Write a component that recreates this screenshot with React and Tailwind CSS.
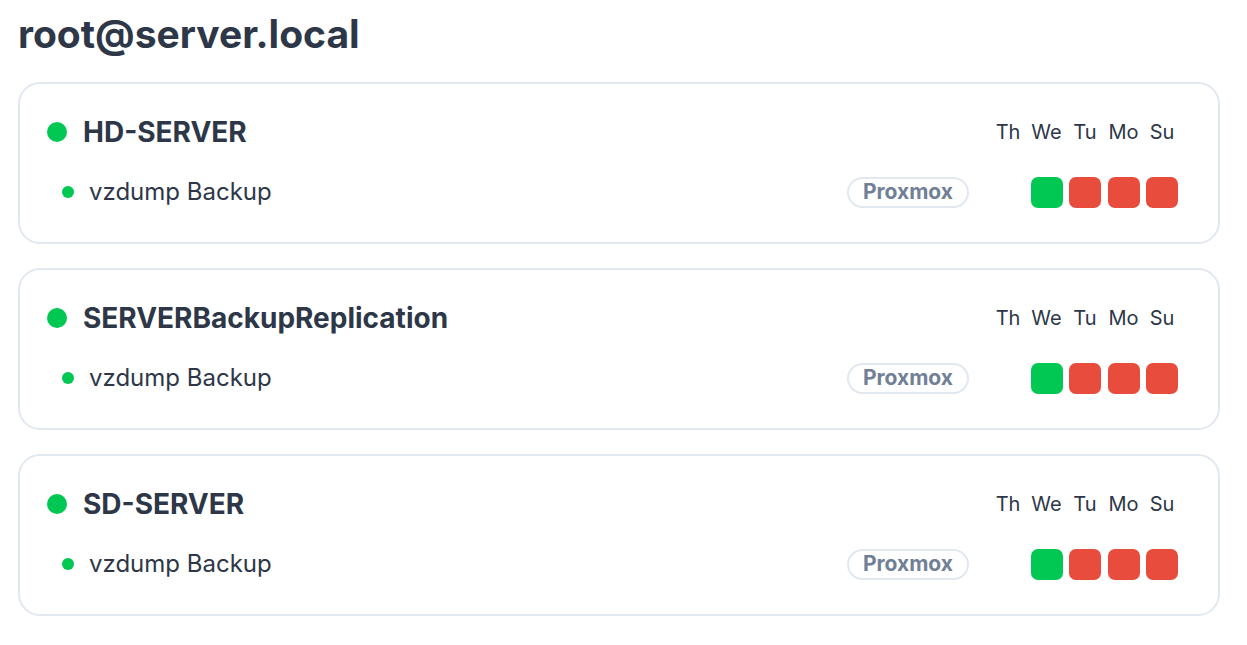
import React from 'react';

const servers = [
  { name: 'HD-SERVER', jobs: [{ name: 'vzdump Backup', type: 'Proxmox', days: [null, 'ok', 'fail', 'fail', 'fail'] }] },
  { name: 'SERVERBackupReplication', jobs: [{ name: 'vzdump Backup', type: 'Proxmox', days: [null, 'ok', 'fail', 'fail', 'fail'] }] },
  { name: 'SD-SERVER', jobs: [{ name: 'vzdump Backup', type: 'Proxmox', days: [null, 'ok', 'fail', 'fail', 'fail'] }] },
];

const dayLabels = ['Th', 'We', 'Tu', 'Mo', 'Su'];

function DayCell({ status }) {
  if (!status) return <div className="w-8 h-[31px]" />;
  return (
    <div
      className={
        status === 'ok'
          ? 'w-8 h-[31px] rounded-[7px] bg-[#00c853]'
          : 'w-8 h-[31px] rounded-[7px] bg-[#e74c3c]'
      }
    />
  );
}

function ServerCard({ server }) {
  return (
    <div className="border-2 border-[#e2e8f0] rounded-[22px] pl-[27px] pr-10 pt-8 pb-[34px] bg-white">
      {/* Header row */}
      <div className="flex items-center h-8">
        <div className="w-5 h-5 rounded-full bg-[#00c853] shrink-0" />
        <h2 className="ml-4 text-[28px] font-bold text-[#2d3748] leading-8">{server.name}</h2>
        <div className="flex-1" />
        <div className="flex gap-[6.5px]">
          {dayLabels.map((d) => (
            <div key={d} className="w-8 text-center text-[20px] leading-8 text-[#2d3748]">
              {d}
            </div>
          ))}
        </div>
      </div>

      {/* Jobs */}
      {server.jobs.map((job) => (
        <div key={job.name} className="flex items-center h-8 mt-7">
          <div className="ml-[15px] w-3 h-3 rounded-full bg-[#00c853] shrink-0" />
          <span className="ml-[15px] text-[24px] text-[#2d3748] leading-8">{job.name}</span>
          <div className="flex-1" />
          <span className="px-[14px] h-[31px] flex items-center rounded-full border-2 border-[#e2e8f0] text-[21px] font-bold text-[#718096]">
            {job.type}
          </span>
          <div className="flex gap-[6.5px] ml-[23px]">
            {job.days.map((s, i) => (
              <DayCell key={i} status={s} />
            ))}
          </div>
        </div>
      ))}
    </div>
  );
}

export default function App() {
  return (
    <div className="min-h-screen bg-white pl-[18px] pr-[27px] pt-[14px] font-['Inter',sans-serif]">
      <h1 className="text-[39px] leading-10 font-bold text-[#2d3748]">root@server.local</h1>
      <div className="mt-[28px] flex flex-col gap-6">
        {servers.map((s) => (
          <ServerCard key={s.name} server={s} />
        ))}
      </div>
    </div>
  );
}
